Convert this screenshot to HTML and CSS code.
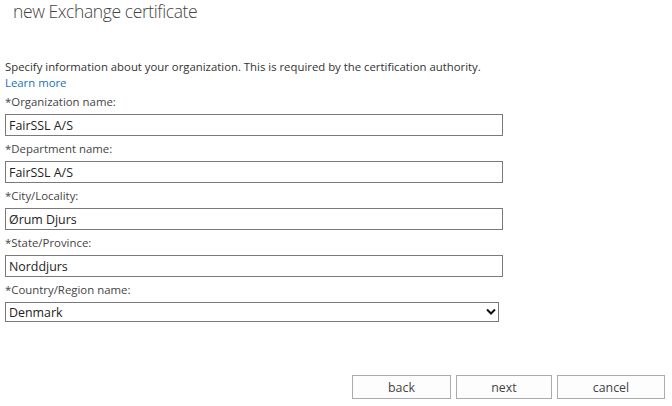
FILE: index.html
```html
<!DOCTYPE html>
<html lang="en">
<head>
  <meta charset="UTF-8" />
  <title>new Exchange certificate</title>
  <link rel="stylesheet" href="styles.css">
</head>
<body>
  <!-- Title -->
  <div class="title">new Exchange certificate</div>

  <!-- Form -->
  <div class="content">
    <p class="intro">
      Specify information about your organization. This is required by the certification authority.<br>
      <a href="#" class="learn-more">Learn more</a>
    </p>

    <div class="field">
      <label for="org">*Organization name:</label>
      <input type="text" id="org" value="FairSSL A/S">
    </div>
    <div class="field">
      <label for="dept">*Department name:</label>
      <input type="text" id="dept" value="FairSSL A/S">
    </div>
    <div class="field">
      <label for="city">*City/Locality:</label>
      <input type="text" id="city" value="Ørum Djurs">
    </div>
    <div class="field">
      <label for="state">*State/Province:</label>
      <input type="text" id="state" value="Norddjurs">
    </div>
    <div class="field">
      <label for="country">*Country/Region name:</label>
      <div class="select-wrap">
        <select id="country">
          <option>Denmark</option>
          <option>Germany</option>
          <option>Sweden</option>
        </select>
        <svg class="chevron" width="10" height="8" viewBox="0 0 10 8">
          <polyline points="1,1.5 5,5.5 9,1.5" fill="none" stroke="#111" stroke-width="2"/>
        </svg>
      </div>
    </div>
  </div>

  <!-- Buttons -->
  <div class="footer">
    <button class="btn btn-back">back</button>
    <button class="btn btn-next">next</button>
    <button class="btn btn-cancel">cancel</button>
  </div>
</body>
</html>
```

FILE: styles.css
```css
body {
  margin: 0;
  width: 672px;
  height: 406px;
  background: #fff;
  font-family: "Open Sans", Arial, sans-serif;
  color: #333;
  display: flex;
  flex-direction: column;
}

.title {
  padding: 0 0 0 13px;
  height: 24px;
  line-height: 22px;
  font-size: 17.5px;
  font-weight: 300;
  letter-spacing: -0.4px;
  color: #444;
}

.content {
  padding: 35px 0 0 5px;
  flex: 1;
}

.intro {
  margin: 0 0 2px;
  font-size: 11.35px;
  line-height: 16px;
  color: #333;
}

.learn-more {
  color: #1a72b8;
  text-decoration: none;
}

.field {
  margin-bottom: 4px;
}

.field label {
  display: block;
  font-size: 11.4px;
  line-height: 18px;
  margin-bottom: 3px;
  color: #444;
}

.field input {
  box-sizing: border-box;
  display: block;
  width: 498px;
  height: 22px;
  margin: 0;
  padding: 0 3px;
  border: 1px solid #7a7a7a;
  font-family: inherit;
  font-size: 12.4px;
  color: #222;
  outline: none;
}

.select-wrap {
  position: relative;
  width: 494px;
}

.select-wrap select {
  box-sizing: border-box;
  display: block;
  width: 100%;
  height: 20px;
  margin: 0;
  padding: 0 3px;
  border: 1px solid #7a7a7a;
  border-radius: 0;
  background: #fff;
  font-family: inherit;
  font-size: 12.4px;
  color: #222;
  appearance: none;
  -webkit-appearance: none;
  outline: none;
}

.chevron {
  position: absolute;
  right: 3px;
  top: 6px;
  pointer-events: none;
}

.footer {
  display: flex;
  justify-content: flex-end;
  gap: 5px;
  padding: 0 7px 7px 0;
}

.btn {
  box-sizing: border-box;
  height: 24px;
  padding: 0;
  border: 1px solid #ababab;
  background: #fdfdfd;
  font-family: inherit;
  font-size: 12.4px;
  color: #444;
}

.btn-back {
  width: 99px;
}

.btn-next {
  width: 96px;
}

.btn-cancel {
  width: 108px;
}
```
